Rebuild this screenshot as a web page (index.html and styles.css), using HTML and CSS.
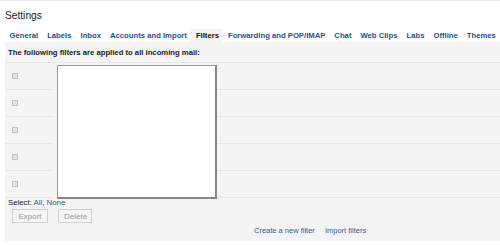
FILE: index.html
```html
<!DOCTYPE html>
<html lang="en">
<head>
  <meta charset="UTF-8">
  <title>Settings - Filters</title>
  <link rel="stylesheet" href="styles.css">
</head>
<body>
  <div class="page">
    <div class="header">
      <h1>Settings</h1>
    </div>
    <div class="tabs">
      <a class="tab">General</a>
      <a class="tab">Labels</a>
      <a class="tab">Inbox</a>
      <a class="tab">Accounts and Import</a>
      <a class="tab active">Filters</a>
      <a class="tab">Forwarding and POP/IMAP</a>
      <a class="tab">Chat</a>
      <a class="tab">Web Clips</a>
      <a class="tab">Labs</a>
      <a class="tab">Offline</a>
      <a class="tab">Themes</a>
    </div>
    <div class="panel">
      <div class="panel-title">The following filters are applied to all incoming mail:</div>
      <div class="filter-grid">
        <div class="cell check-cell row1"><span class="checkbox"></span></div>
        <div class="cell check-cell row2"><span class="checkbox"></span></div>
        <div class="cell check-cell row3"><span class="checkbox"></span></div>
        <div class="cell check-cell row4"><span class="checkbox"></span></div>
        <div class="cell check-cell row5"><span class="checkbox"></span></div>
        <div class="filter-box"></div>
        <div class="cell rest-cell row1"></div>
        <div class="cell rest-cell row2"></div>
        <div class="cell rest-cell row3"></div>
        <div class="cell rest-cell row4"></div>
        <div class="cell rest-cell row5"></div>
      </div>
      <div class="select-line">Select: <a>All</a>, <a>None</a></div>
      <div class="buttons">
        <button disabled>Export</button>
        <button disabled>Delete</button>
      </div>
      <div class="footer-links">
        <a>Create a new filter</a>
        <a>Import filters</a>
      </div>
    </div>
  </div>
</body>
</html>
```

FILE: styles.css
```css
body {
  margin: 0;
  background: #fff;
  font-family: "Liberation Sans", Arial, sans-serif;
  color: #222;
}

.page {
  border-top: 1px solid #e8e8e8;
}

.header {
  height: 28px;
  display: flex;
  align-items: center;
  padding-left: 5px;
}

.header h1 {
  margin: 0;
  font-size: 10.2px;
  font-weight: normal;
  color: #222;
}

.tabs {
  display: flex;
  padding-left: 5px;
  height: 13px;
}

.tab {
  padding: 0 4.5px;
  font-size: 7.7px;
  font-weight: bold;
  line-height: 13px;
  color: #2a4f8f;
  white-space: nowrap;
}

.tab.active {
  background: #f4f4f4;
  color: #111;
}

.panel {
  margin-left: 5px;
  background: #f4f4f4;
  padding-bottom: 5px;
}

.panel-title {
  padding: 4px 3px 3px;
  font-size: 7.7px;
  font-weight: bold;
  line-height: 13px;
  border-bottom: 1px solid #e6e6e6;
}

.filter-grid {
  display: grid;
  grid-template-columns: 47px 165px 1fr;
  grid-template-rows: repeat(5, 27px);
}

.cell {
  box-sizing: border-box;
  border-bottom: 1px solid #e6e6e6;
}

.check-cell {
  grid-column: 1;
  display: flex;
  align-items: center;
  padding-left: 7px;
}

.rest-cell {
  grid-column: 3;
}

.row1 { grid-row: 1; }
.row2 { grid-row: 2; }
.row3 { grid-row: 3; }
.row4 { grid-row: 4; }
.row5 { grid-row: 5; }

.checkbox {
  width: 6px;
  height: 6px;
  box-sizing: border-box;
  border: 1px solid #c4c4c4;
  background: #e4e4e4;
}

.filter-box {
  grid-column: 2;
  grid-row: 1 / 6;
  align-self: start;
  margin: 2px 0 0 5px;
  width: 160px;
  height: 134px;
  box-sizing: border-box;
  background: #fff;
  border: 1px solid #9a9a9a;
  border-right: 2px solid #888;
  border-bottom: 2px solid #888;
}

.select-line {
  padding-left: 3px;
  font-size: 7.8px;
  line-height: 9px;
}

.select-line a,
.footer-links a {
  color: #2a5db0;
}

.buttons {
  display: flex;
  gap: 10px;
  margin-top: 2px;
  padding-left: 7px;
}

.buttons button {
  height: 14px;
  padding: 0 5px;
  font-family: "Liberation Sans", Arial, sans-serif;
  font-size: 8px;
  color: #999;
  background: #f6f6f6;
  border: 1px solid #cfcfcf;
  border-radius: 1px;
}

.buttons button:first-child {
  width: 36px;
}

.buttons button:last-child {
  width: 34px;
}

.footer-links {
  display: flex;
  gap: 10px;
  margin-top: 3px;
  padding-left: 249px;
  font-size: 7.5px;
  line-height: 10px;
}
```
